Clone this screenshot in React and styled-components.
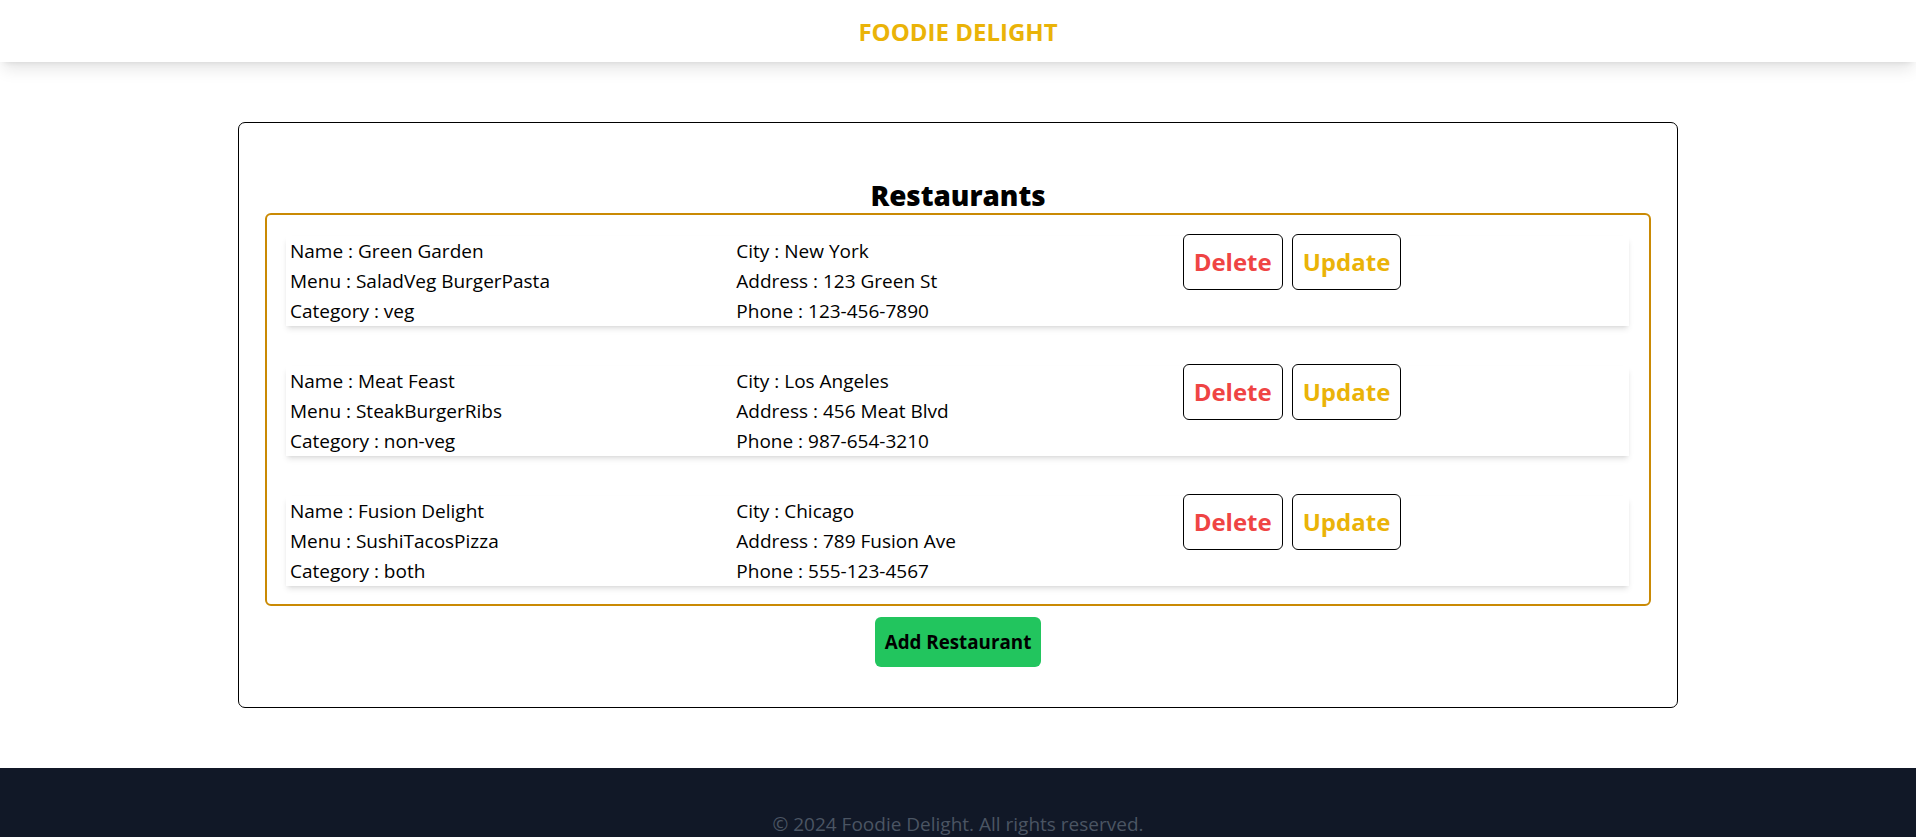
import React from "react";
import styled, { createGlobalStyle } from "styled-components";

const GlobalStyle = createGlobalStyle`
  body {
    margin: 0;
    background: #ffffff;
    font-family: "Open Sans", "Noto Sans", sans-serif;
    color: #000000;
  }
`;

const Header = styled.header`
  height: 62px;
  display: flex;
  align-items: center;
  justify-content: center;
  background: #ffffff;
  box-shadow: 0 10px 15px -3px rgba(0, 0, 0, 0.1), 0 4px 6px -4px rgba(0, 0, 0, 0.1);
  position: relative;
  z-index: 1;
`;

const Brand = styled.h1`
  margin: 0;
  font-size: 24px;
  font-weight: 700;
  color: #eab308;
`;

const Main = styled.main`
  padding: 60px 0;
`;

const Card = styled.section`
  width: 1440px;
  margin: 0 auto;
  box-sizing: border-box;
  border: 1px solid #000000;
  border-radius: 7px;
  padding: 54px 26px 40px 26px;
  display: flex;
  flex-direction: column;
  align-items: center;
`;

const Title = styled.h2`
  margin: 0;
  font-size: 27.8px;
  line-height: 36px;
  font-weight: 800;
  color: #000000;
`;

const List = styled.div`
  align-self: stretch;
  border: 2px solid #ca8a04;
  border-radius: 6px;
  padding: 20.5px 20px 18.5px 19px;
  display: flex;
  flex-direction: column;
  gap: 40px;
`;

const Item = styled.div`
  display: grid;
  grid-template-columns: repeat(3, 1fr);
  padding-left: 4px;
  background: #ffffff;
  box-shadow: 0 4px 6px -1px rgba(0, 0, 0, 0.1), 0 2px 4px -2px rgba(0, 0, 0, 0.1);
`;

const Column = styled.div`
  display: flex;
  flex-direction: column;
`;

const Line = styled.p`
  margin: 0;
  font-size: 19px;
  line-height: 30px;
  color: #000000;
`;

const Actions = styled.div`
  display: flex;
  align-items: flex-start;
  gap: 9px;
  margin-top: -1.5px;
`;

const ActionButton = styled.button`
  font-family: inherit;
  font-size: 24px;
  font-weight: 700;
  line-height: 32px;
  padding: 11px 10px;
  background: #ffffff;
  border: 1px solid #000000;
  border-radius: 6px;
  color: ${({ $tone }) => ($tone === "danger" ? "#ef4444" : "#eab308")};
  cursor: pointer;
`;

const AddButton = styled.button`
  margin-top: 11px;
  font-family: inherit;
  font-size: 18.8px;
  font-weight: 700;
  line-height: 28px;
  padding: 11px 10px;
  background: #22c55e;
  color: #000000;
  border: none;
  border-radius: 6px;
  cursor: pointer;
`;

const Footer = styled.footer`
  background: #111827;
  padding: 42px 0 32px;
  text-align: center;
`;

const FooterText = styled.p`
  margin: 0;
  font-size: 19px;
  line-height: 28px;
  color: #4b5563;
`;

const restaurants = [
  {
    name: "Green Garden",
    menu: "SaladVeg BurgerPasta",
    category: "veg",
    city: "New York",
    address: "123 Green St",
    phone: "123-456-7890",
  },
  {
    name: "Meat Feast",
    menu: "SteakBurgerRibs",
    category: "non-veg",
    city: "Los Angeles",
    address: "456 Meat Blvd",
    phone: "987-654-3210",
  },
  {
    name: "Fusion Delight",
    menu: "SushiTacosPizza",
    category: "both",
    city: "Chicago",
    address: "789 Fusion Ave",
    phone: "555-123-4567",
  },
];

const App = () => {
  return (
    <>
      <GlobalStyle />
      <Header>
        <Brand>FOODIE DELIGHT</Brand>
      </Header>
      <Main>
        <Card>
          <Title>Restaurants</Title>
          <List>
            {restaurants.map((r) => (
              <Item key={r.name}>
                <Column>
                  <Line>Name : {r.name}</Line>
                  <Line>Menu : {r.menu}</Line>
                  <Line>Category : {r.category}</Line>
                </Column>
                <Column>
                  <Line>City : {r.city}</Line>
                  <Line>Address : {r.address}</Line>
                  <Line>Phone : {r.phone}</Line>
                </Column>
                <Actions>
                  <ActionButton $tone="danger">Delete</ActionButton>
                  <ActionButton $tone="warn">Update</ActionButton>
                </Actions>
              </Item>
            ))}
          </List>
          <AddButton>Add Restaurant</AddButton>
        </Card>
      </Main>
      <Footer>
        <FooterText>© 2024 Foodie Delight. All rights reserved.</FooterText>
      </Footer>
    </>
  );
};

export default App;
